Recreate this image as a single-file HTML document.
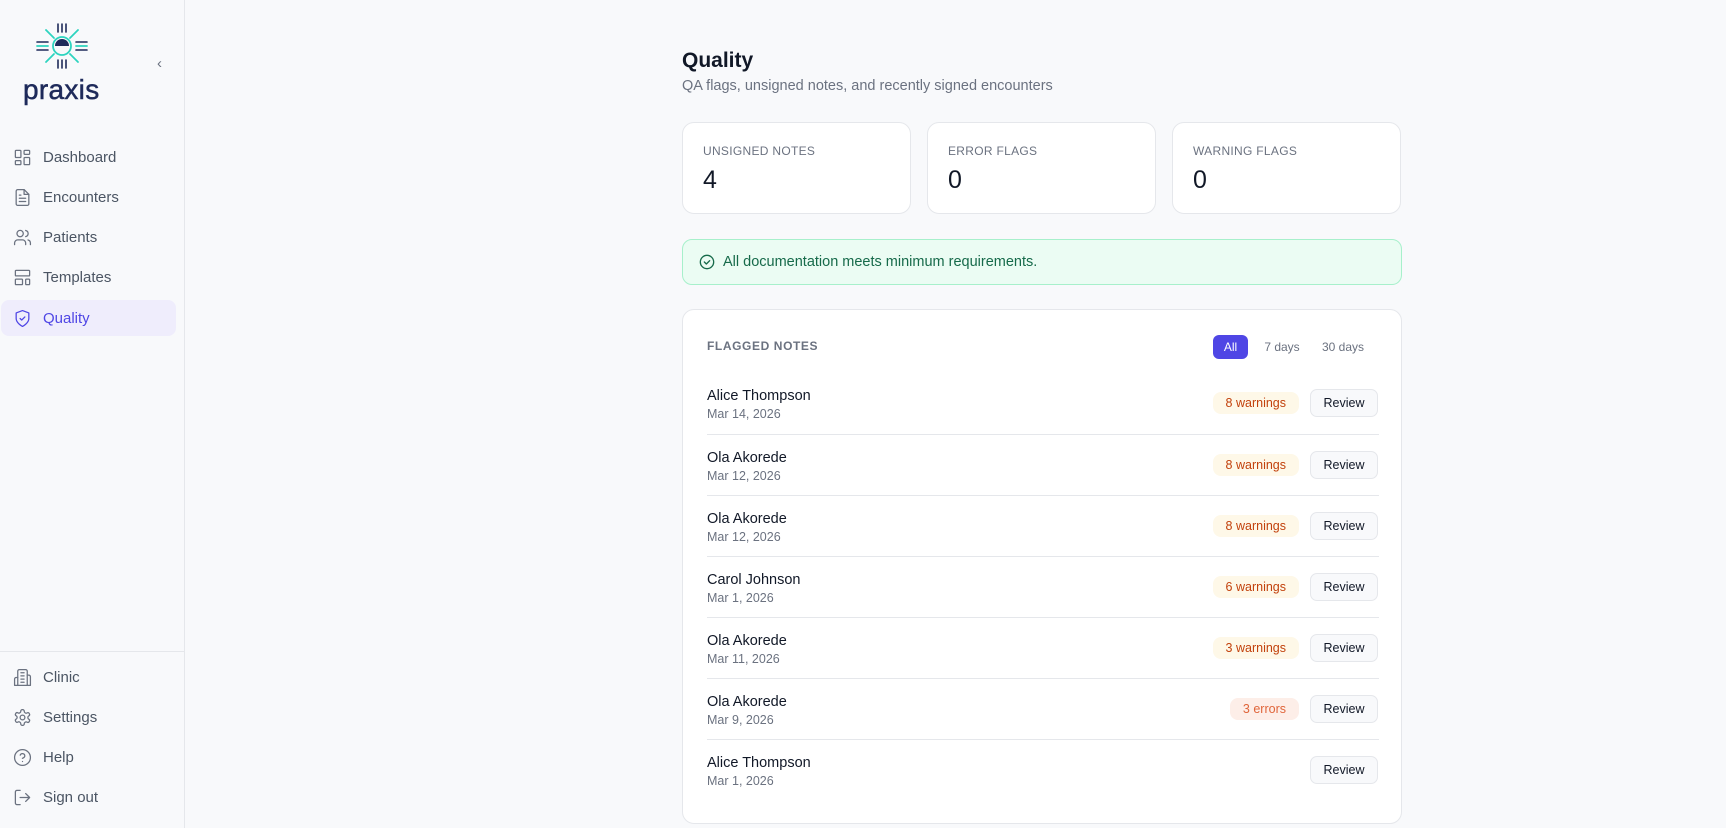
<!DOCTYPE html>
<html><head><meta charset="utf-8"><style>
*{box-sizing:border-box;margin:0;padding:0}
body{width:1726px;height:828px;overflow:hidden;background:#f8f9fb;font-family:"Liberation Sans",sans-serif;position:relative;color:#111827}
.side{position:absolute;left:0;top:0;width:185px;height:828px;background:#f8f9fb;border-right:1px solid #e5e7eb}
.nav{position:absolute;left:1px;width:175px;height:36px;display:flex;align-items:center;padding-left:12px;font-size:15px;color:#4b5563;border-radius:8px}
.nav svg{width:19px;height:19px;margin-right:11px;fill:none;stroke:#6b7280;stroke-width:1.6;stroke-linecap:round;stroke-linejoin:round}
.nav.act{background:#efedfc;color:#4f46e5}
.nav.act svg{stroke:#4f46e5}
.h1{position:absolute;left:682px;top:49px;font-size:21px;font-weight:bold;color:#111827}
.sub{position:absolute;left:682px;top:78px;font-size:14.5px;color:#6b7280}
.stat{position:absolute;top:122px;width:229px;height:92px;background:#fff;border:1px solid #e5e7eb;border-radius:12px;padding:21px 0 0 20px}
.stat .l{font-size:12px;color:#6b7280;letter-spacing:.3px}
.stat .v{font-size:25px;color:#111827;margin-top:8px}
.alert{position:absolute;left:682px;top:239px;width:720px;height:46px;background:#ebfcf3;border:1px solid #a7f0cb;border-radius:10px;display:flex;align-items:center;padding-left:16px;font-size:14.5px;color:#166a4a}
.card{position:absolute;left:682px;top:309px;width:720px;height:515px;background:#fff;border:1px solid #e5e7eb;border-radius:12px}
.ch{position:absolute;left:24px;top:29px;font-size:12px;font-weight:bold;color:#6b7280;letter-spacing:.6px}
.pill{position:absolute;top:25px;height:24px;font-size:12px;color:#6b7280;display:flex;align-items:center;justify-content:center;border-radius:6px}
.row{position:absolute;left:24px;width:672px;height:61px}
.row+.row{border-top:1px solid #e5e7eb}
.nm{position:absolute;left:0;top:15px;font-size:14.5px;color:#111827}
.dt{position:absolute;left:0;top:34px;font-size:12.5px;color:#6b7280}
.rv{position:absolute;right:1px;top:16px;width:68px;height:28px;border:1px solid #e5e7eb;border-radius:7px;background:#f8f9fb;font-size:12.5px;display:flex;align-items:center;justify-content:center;color:#111827}
.bd{position:absolute;right:80px;top:19px;height:22px;border-radius:8px;font-size:12.5px;display:flex;align-items:center;padding:0 13px}
.w{background:#fef8e8;color:#c2410c}
.e{background:#fdeee8;color:#e0653a}
</style></head><body>
<div class="side">
<svg style="position:absolute;left:34px;top:22px" width="56" height="48" viewBox="0 0 56 48" fill="none" stroke-linecap="round">
<g stroke="#1e2a5a" stroke-width="1.6"><line x1="24" y1="2" x2="24" y2="10"/><line x1="28" y1="2" x2="28" y2="10"/><line x1="32" y1="2" x2="32" y2="10"/><line x1="24" y1="38" x2="24" y2="46"/><line x1="28" y1="38" x2="28" y2="46"/><line x1="32" y1="38" x2="32" y2="46"/><line x1="3" y1="20" x2="14" y2="20"/><line x1="3" y1="28" x2="14" y2="28"/><line x1="42" y1="20" x2="53" y2="20"/><line x1="42" y1="28" x2="53" y2="28"/></g>
<g stroke="#2dd4bf" stroke-width="1.8"><line x1="12" y1="8" x2="20" y2="16"/><line x1="44" y1="8" x2="36" y2="16"/><line x1="12" y1="40" x2="20" y2="32"/><line x1="44" y1="40" x2="36" y2="32"/><line x1="3" y1="24" x2="14" y2="24"/><line x1="42" y1="24" x2="53" y2="24"/><circle cx="28" cy="24" r="9"/></g>
<path d="M21 24a7 7 0 0 1 14 0z" fill="#1e2a5a"/>
</svg>
<div style="position:absolute;left:23px;top:74px;font-size:28px;color:#1e2a5a;letter-spacing:.3px;-webkit-text-stroke:.5px #1e2a5a">praxis</div>
<div style="position:absolute;left:157px;top:55px;font-size:15px;color:#6b7280">‹</div>
<div class="nav" style="top:139px"><svg viewBox="0 0 24 24"><rect x="3" y="3" width="7" height="9" rx="1"/><rect x="14" y="3" width="7" height="5" rx="1"/><rect x="14" y="12" width="7" height="9" rx="1"/><rect x="3" y="16" width="7" height="5" rx="1"/></svg>Dashboard</div>
<div class="nav" style="top:179px"><svg viewBox="0 0 24 24"><path d="M14 2H6a2 2 0 0 0-2 2v16a2 2 0 0 0 2 2h12a2 2 0 0 0 2-2V8z"/><path d="M14 2v6h6M8 13h8M8 17h8M8 9h2"/></svg>Encounters</div>
<div class="nav" style="top:219px"><svg viewBox="0 0 24 24"><circle cx="9" cy="7" r="4"/><path d="M2 21v-2a4 4 0 0 1 4-4h6a4 4 0 0 1 4 4v2M16 3.1a4 4 0 0 1 0 7.8M22 21v-2a4 4 0 0 0-3-3.9"/></svg>Patients</div>
<div class="nav" style="top:259px"><svg viewBox="0 0 24 24"><rect x="3" y="3" width="18" height="7" rx="1"/><rect x="3" y="14" width="9" height="7" rx="1"/><rect x="16" y="14" width="5" height="7" rx="1"/></svg>Templates</div>
<div class="nav act" style="top:300px"><svg viewBox="0 0 24 24"><path d="M12 22s8-4 8-10V5l-8-3-8 3v7c0 6 8 10 8 10z"/><path d="M9 12l2 2 4-4"/></svg>Quality</div>
<div style="position:absolute;left:0;top:651px;width:184px;border-top:1px solid #e5e7eb"></div>
<div class="nav" style="top:659px"><svg viewBox="0 0 24 24"><path d="M6 22V4a2 2 0 0 1 2-2h8a2 2 0 0 1 2 2v18z"/><path d="M6 12H4a2 2 0 0 0-2 2v8h4M18 9h2a2 2 0 0 1 2 2v11h-4M10 6h4M10 10h4M10 14h4M10 18h4"/></svg>Clinic</div>
<div class="nav" style="top:699px"><svg viewBox="0 0 24 24"><circle cx="12" cy="12" r="3"/><path d="M12.2 2h-.4a2 2 0 0 0-2 2v.2a2 2 0 0 1-1 1.7l-.4.3a2 2 0 0 1-2 0l-.2-.1a2 2 0 0 0-2.7.7l-.2.4a2 2 0 0 0 .7 2.7l.2.1a2 2 0 0 1 1 1.7v.5a2 2 0 0 1-1 1.7l-.2.1a2 2 0 0 0-.7 2.7l.2.4a2 2 0 0 0 2.7.7l.2-.1a2 2 0 0 1 2 0l.4.3a2 2 0 0 1 1 1.7V20a2 2 0 0 0 2 2h.4a2 2 0 0 0 2-2v-.2a2 2 0 0 1 1-1.7l.4-.3a2 2 0 0 1 2 0l.2.1a2 2 0 0 0 2.7-.7l.2-.4a2 2 0 0 0-.7-2.7l-.2-.1a2 2 0 0 1-1-1.7v-.5a2 2 0 0 1 1-1.7l.2-.1a2 2 0 0 0 .7-2.7l-.2-.4a2 2 0 0 0-2.7-.7l-.2.1a2 2 0 0 1-2 0l-.4-.3a2 2 0 0 1-1-1.7V4a2 2 0 0 0-2-2z"/></svg>Settings</div>
<div class="nav" style="top:739px"><svg viewBox="0 0 24 24"><circle cx="12" cy="12" r="10"/><path d="M9.1 9a3 3 0 0 1 5.8 1c0 2-3 3-3 3M12 17h.01"/></svg>Help</div>
<div class="nav" style="top:779px"><svg viewBox="0 0 24 24"><path d="M9 21H5a2 2 0 0 1-2-2V5a2 2 0 0 1 2-2h4M16 17l5-5-5-5M21 12H9"/></svg>Sign out</div>
</div>

<div class="h1">Quality</div>
<div class="sub">QA flags, unsigned notes, and recently signed encounters</div>
<div class="stat" style="left:682px"><div class="l">UNSIGNED NOTES</div><div class="v">4</div></div>
<div class="stat" style="left:927px"><div class="l">ERROR FLAGS</div><div class="v">0</div></div>
<div class="stat" style="left:1172px"><div class="l">WARNING FLAGS</div><div class="v">0</div></div>
<div class="alert"><svg width="16" height="16" viewBox="0 0 24 24" fill="none" stroke="#166a4a" stroke-width="2" stroke-linecap="round" stroke-linejoin="round" style="margin-right:8px"><circle cx="12" cy="12" r="10"/><path d="M8 12l3 3 5-5"/></svg>All documentation meets minimum requirements.</div>

<div class="card">
<div class="ch">FLAGGED NOTES</div>
<div class="pill" style="left:530px;width:35px;background:#4f46e5;color:#fff">All</div>
<div class="pill" style="left:574px;width:50px">7 days</div>
<div class="pill" style="left:632px;width:56px">30 days</div>
<div class="row" style="top:63px"><div class="nm">Alice Thompson</div><div class="dt">Mar 14, 2026</div><div class="bd w">8 warnings</div><div class="rv">Review</div></div>
<div class="row" style="top:124px"><div class="nm">Ola Akorede</div><div class="dt">Mar 12, 2026</div><div class="bd w">8 warnings</div><div class="rv">Review</div></div>
<div class="row" style="top:185px"><div class="nm">Ola Akorede</div><div class="dt">Mar 12, 2026</div><div class="bd w">8 warnings</div><div class="rv">Review</div></div>
<div class="row" style="top:246px"><div class="nm">Carol Johnson</div><div class="dt">Mar 1, 2026</div><div class="bd w">6 warnings</div><div class="rv">Review</div></div>
<div class="row" style="top:307px"><div class="nm">Ola Akorede</div><div class="dt">Mar 11, 2026</div><div class="bd w">3 warnings</div><div class="rv">Review</div></div>
<div class="row" style="top:368px"><div class="nm">Ola Akorede</div><div class="dt">Mar 9, 2026</div><div class="bd e">3 errors</div><div class="rv">Review</div></div>
<div class="row" style="top:429px"><div class="nm">Alice Thompson</div><div class="dt">Mar 1, 2026</div><div class="rv">Review</div></div>
</div>
</body></html>
